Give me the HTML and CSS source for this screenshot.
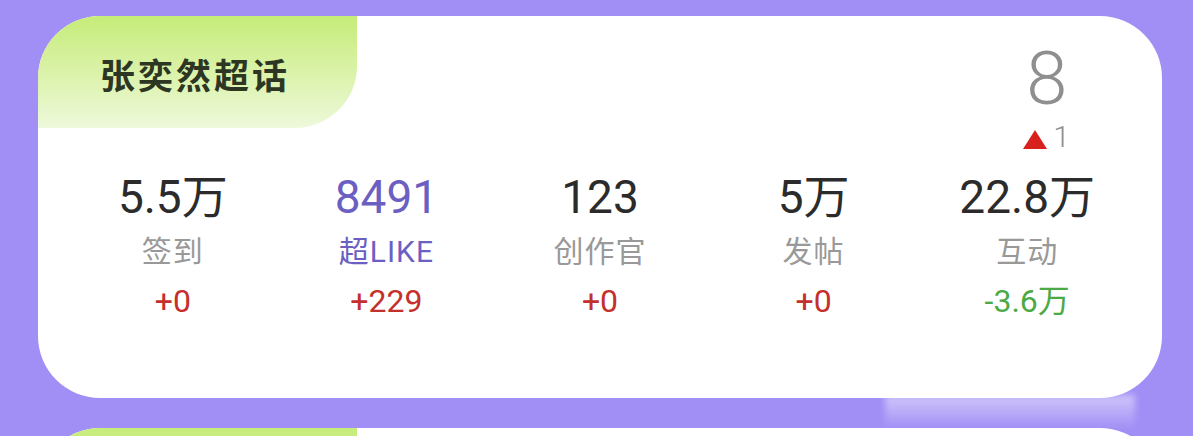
FILE: index.html
```html
<!DOCTYPE html>
<html lang="zh-CN">
  <head>
    <meta charset="UTF-8" />
    <meta name="viewport" content="width=device-width, initial-scale=1.0" />
    <title>超话数据</title>
    <link rel="stylesheet" href="styles.css">
  </head>
  <body>
    <div class="board">
      <!-- Topic card -->
      <div class="topic-card">
        <div class="card-head">
          <div class="topic-tab">张奕然超话</div>
          <div class="rank">
            <div class="rank-num">8</div>
            <div class="rank-change"><span class="arrow-up"></span>1</div>
          </div>
        </div>

        <div class="stats">
          <div class="stat">
            <div class="stat-value">5.5万</div>
            <div class="stat-label">签到</div>
            <div class="stat-delta up">+0</div>
          </div>
          <div class="stat like">
            <div class="stat-value">8491</div>
            <div class="stat-label">超LIKE</div>
            <div class="stat-delta up">+229</div>
          </div>
          <div class="stat">
            <div class="stat-value">123</div>
            <div class="stat-label">创作官</div>
            <div class="stat-delta up">+0</div>
          </div>
          <div class="stat">
            <div class="stat-value">5万</div>
            <div class="stat-label">发帖</div>
            <div class="stat-delta up">+0</div>
          </div>
          <div class="stat">
            <div class="stat-value">22.8万</div>
            <div class="stat-label">互动</div>
            <div class="stat-delta down">-3.6万</div>
          </div>
        </div>

        <div class="watermark">微信公众号啪啪陪佳逆 PUSH</div>
      </div>

      <div class="topic-card">
        <div class="card-head">
          <div class="topic-tab"></div>
        </div>
      </div>

      <div class="haze"></div>
    </div>
  </body>
</html>
```

FILE: styles.css
```css
:root {
  --bg-purple: #a28ff6;
  --white: #ffffff;
  --text-dark: #2b2b2b;
  --text-gray: #999999;
  --like-purple: #6c5fc2;
  --red: #c4302b;
  --green: #4caa45;
  --tab-title: #2c3623;
}

* {
  margin: 0;
  padding: 0;
  box-sizing: border-box;
}

body {
  background-color: var(--bg-purple);
  font-family: "Roboto", "Noto Sans CJK SC", sans-serif;
  overflow: hidden;
}

.board {
  position: relative;
  height: 100vh;
  overflow: hidden;
  padding: 16px 31px 0 38px;
  display: flex;
  flex-direction: column;
  gap: 30px;
}

.topic-card {
  position: relative;
  flex-shrink: 0;
  background: var(--white);
  border-radius: 62px;
  height: 382px;
  overflow: hidden;
}

.card-head {
  display: flex;
  justify-content: space-between;
  height: 112px;
}

.topic-tab {
  width: 319px;
  height: 112px;
  padding: 40px 0 0 62px;
  background: linear-gradient(180deg, #c6ec79 0%, #dcf3ad 55%, #eef9dc 100%);
  border-bottom-right-radius: 62px;
  font-family: "Noto Sans CJK SC", sans-serif;
  font-size: 35px;
  font-weight: 700;
  letter-spacing: 3px;
  line-height: 1;
  color: var(--tab-title);
}

/* rank in the top right corner */
.rank {
  display: flex;
  flex-direction: column;
  align-items: center;
  padding: 26px 92px 0 0;
  color: #8f8f8f;
}

.rank-num {
  font-size: 74px;
  font-weight: 300;
  line-height: 1;
}

.rank-change {
  display: flex;
  align-items: center;
  gap: 6px;
  margin-top: 6px;
  font-size: 30px;
  font-weight: 300;
  line-height: 1;
}

.arrow-up {
  width: 0;
  height: 0;
  border-left: 12px solid transparent;
  border-right: 12px solid transparent;
  border-bottom: 19px solid #d8201c;
  margin-top: 4px;
}

.stats {
  display: grid;
  grid-template-columns: repeat(5, 1fr);
  padding: 40px 28px 0;
}

.stat {
  display: flex;
  flex-direction: column;
  align-items: center;
}

.stat-value {
  font-size: 46px;
  line-height: 58px;
  color: var(--text-dark);
}

.stat-label {
  font-size: 30px;
  line-height: 52px;
  letter-spacing: 1px;
  color: var(--text-gray);
}

.stat-delta {
  font-size: 32px;
  line-height: 46px;
}

.stat-delta.up {
  color: var(--red);
}

.stat-delta.down {
  color: var(--green);
}

.like .stat-value,
.like .stat-label {
  color: var(--like-purple);
}

.watermark {
  position: absolute;
  left: 280px;
  top: 300px;
  transform: rotate(-11deg);
  transform-origin: left top;
  font-family: "Noto Sans CJK SC", sans-serif;
  font-size: 42px;
  font-weight: 700;
  letter-spacing: 2px;
  color: rgba(0, 0, 0, 0.02);
  pointer-events: none;
}

.haze {
  position: absolute;
  left: 885px;
  top: 395px;
  width: 250px;
  height: 34px;
  background: linear-gradient(180deg, rgba(255, 255, 255, 0.5), rgba(255, 255, 255, 0));
  filter: blur(3px);
}
```
